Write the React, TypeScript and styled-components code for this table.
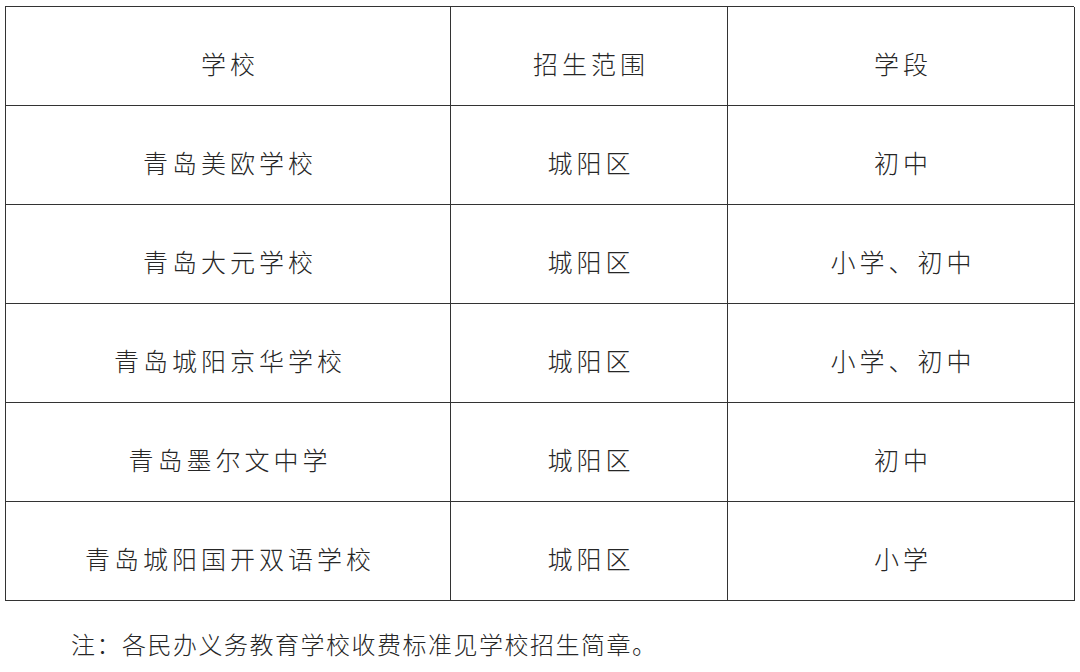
import React from "react";
import styled, { createGlobalStyle } from "styled-components";

const Global = createGlobalStyle`
  html, body { margin: 0; padding: 0; background: #fff; }
  body { font-family: "Noto Sans CJK SC", "Noto Sans", sans-serif; color: #222; }
`;

const Page = styled.div`
  width: 1080px;
  height: 672px;
  padding: 6px 0 0 5px;
  box-sizing: border-box;
  overflow: hidden;
`;

const Table = styled.div`
  width: 1069px;
  display: grid;
  grid-template-columns: 445px 277px 347px;
  border-top: 1.5px solid #333;
  border-left: 1.5px solid #333;
  box-sizing: border-box;
`;

const Cell = styled.div`
  height: 99px;
  box-sizing: border-box;
  border-right: 1.5px solid #333;
  border-bottom: 1.5px solid #333;
  display: flex;
  align-items: center;
  justify-content: center;
  padding-top: 15px;
  padding-left: 4px;
  font-size: 25px;
  font-weight: 300;
  letter-spacing: 4px;
  line-height: 1;
  color: #262626;
`;

const Note = styled.div`
  margin-top: 31px;
  padding-left: 66px;
  font-size: 24px;
  font-weight: 300;
  letter-spacing: 1.5px;
  line-height: 1;
  color: #262626;
`;

const rows: [string, string, string][] = [
  ["学校", "招生范围", "学段"],
  ["青岛美欧学校", "城阳区", "初中"],
  ["青岛大元学校", "城阳区", "小学、初中"],
  ["青岛城阳京华学校", "城阳区", "小学、初中"],
  ["青岛墨尔文中学", "城阳区", "初中"],
  ["青岛城阳国开双语学校", "城阳区", "小学"],
];

export default function App() {
  return (
    <Page>
      <Global />
      <Table>
        {rows.map((r, i) => r.map((c, j) => <Cell key={`${i}-${j}`}>{c}</Cell>))}
      </Table>
      <Note>注：各民办义务教育学校收费标准见学校招生简章。</Note>
    </Page>
  );
}
